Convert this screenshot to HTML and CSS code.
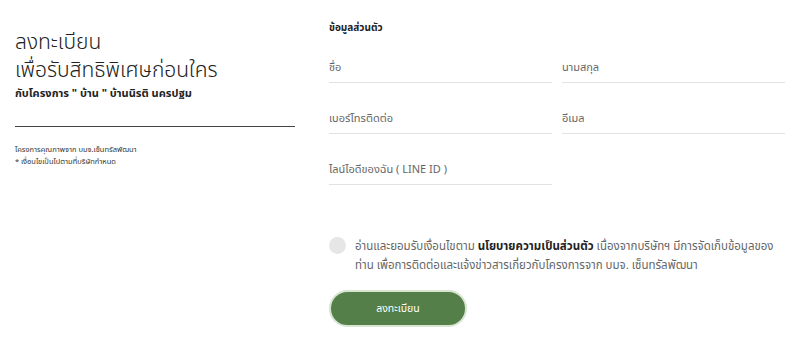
FILE: index.html
```html
<!DOCTYPE html>
<html lang="th">
<head>
<meta charset="utf-8">
<link rel="stylesheet" href="styles.css">
</head>
<body>
<div class="page">
  <section class="intro">
    <h1 class="title">ลงทะเบียน<br>เพื่อรับสิทธิพิเศษก่อนใคร</h1>
    <p class="subtitle">กับโครงการ " บ้าน " บ้านนิรติ นครปฐม</p>
    <hr class="rule">
    <p class="note">โครงการคุณภาพจาก บมจ.เซ็นทรัลพัฒนา</p>
    <p class="note">* เงื่อนไขเป็นไปตามที่บริษัทกำหนด</p>
  </section>
  <section class="form">
    <h2 class="section-title">ข้อมูลส่วนตัว</h2>
    <div class="fields">
      <div class="field">ชื่อ</div>
      <div class="field">นามสกุล</div>
      <div class="field">เบอร์โทรติดต่อ</div>
      <div class="field">อีเมล</div>
      <div class="field">ไลน์ไอดีของฉัน ( LINE ID )</div>
    </div>
    <div class="consent">
      <span class="check"></span>
      <p class="consent-text">อ่านและยอมรับเงื่อนไขตาม <b>นโยบายความเป็นส่วนตัว</b> เนื่องจากบริษัทฯ มีการจัดเก็บข้อมูลของ<br>ท่าน เพื่อการติดต่อและแจ้งข่าวสารเกี่ยวกับโครงการจาก บมจ. เซ็นทรัลพัฒนา</p>
    </div>
    <button class="submit">ลงทะเบียน</button>
  </section>
</div>
</body>
</html>
```
FILE: styles.css
```css
* { box-sizing: border-box; }
html, body { margin: 0; padding: 0; background: #fff; }
body {
  font-family: "Noto Sans", "Noto Sans Thai", "Liberation Sans", sans-serif;
  color: #222;
}
.page {
  display: flex;
  width: 800px;
  height: 343px;
  padding: 0 15px 0 15px;
}
.intro {
  width: 280px;
  padding-top: 27px;
}
.title {
  margin: 0;
  font-weight: 300;
  font-size: 21px;
  line-height: 28px;
  color: #222;
}
.subtitle {
  margin: 2px 0 0;
  font-size: 11px;
  font-weight: 700;
  line-height: 16px;
}
.rule {
  margin: 25px 0 0;
  border: 0;
  border-top: 1px solid #444;
}
.note {
  margin: 0;
  font-size: 7.5px;
  line-height: 12px;
  color: #333;
}
.rule + .note { margin-top: 16px; }
.form {
  margin-left: 34px;
  width: 456px;
  padding-top: 19px;
}
.section-title {
  margin: 0;
  font-size: 10px;
  font-weight: 700;
  line-height: 16px;
  color: #222;
}
.fields {
  margin-top: 16px;
  display: grid;
  grid-template-columns: 223px 223px;
  column-gap: 10px;
  row-gap: 19px;
}
.field {
  height: 32px;
  padding-top: 8px;
  font-size: 11px;
  line-height: 16px;
  color: #666;
  border-bottom: 1px solid #e2e2e2;
}
.consent {
  display: flex;
  align-items: flex-start;
  margin-top: 52px;
}
.check {
  flex: none;
  width: 17px;
  height: 17px;
  border-radius: 50%;
  background: #e6e6e6;
  margin: 0 9px 0 0;
}
.consent-text {
  margin: -1px 0 0;
  font-size: 11.5px;
  line-height: 19px;
  color: #666;
  white-space: nowrap;
}
.consent-text b { color: #222; font-weight: 700; }
.submit {
  display: block;
  margin-top: 16px;
  width: 138px;
  height: 37px;
  border-radius: 19px;
  background: #557f48;
  border: 2px solid #d6e4d0;
  color: #fff;
  font-family: inherit;
  font-size: 10.5px;
  cursor: pointer;
}
```
